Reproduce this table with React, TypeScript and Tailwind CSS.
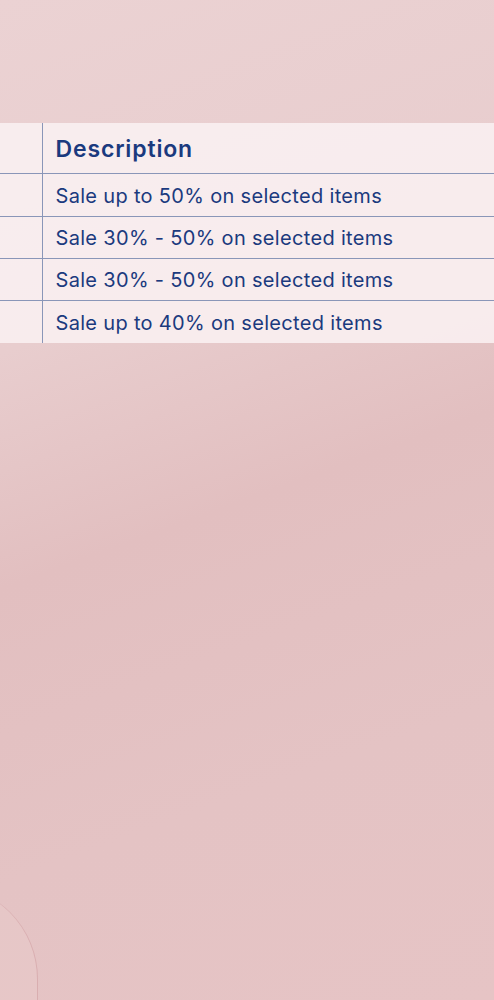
const rows = [
  "Sale up to 50% on selected items",
  "Sale 30% - 50% on selected items",
  "Sale 30% - 50% on selected items",
  "Sale up to 40% on selected items",
];

export default function App() {
  return (
    <div className="relative h-[1000px] w-[494px] overflow-hidden bg-[linear-gradient(160deg,#ebd2d3_0%,#e8cdce_30%,#e2bfc0_50%,#e4c3c4_75%,#e6c4c5_100%)] font-['Inter','Open_Sans',sans-serif]">
      <div className="pt-[123px]">
        <table className="w-full border-collapse bg-[#f9f0f1]/90 text-[#1b3a7e]">
          <thead>
            <tr className="h-[50px] border-b border-[#8a96b8]">
              <th className="w-[42px] border-r border-[#8a96b8]"></th>
              <th className="pl-[13px] pt-[3px] text-left text-[23px] font-semibold tracking-[0.85px]">Description</th>
            </tr>
          </thead>
          <tbody>
            {rows.map((r, i) => (
              <tr key={i} className={i === 0 || i === rows.length - 1 ? "h-[43px] border-b border-[#8a96b8] last:border-b-0" : "h-[42px] border-b border-[#8a96b8]"}>
                <td className="border-r border-[#8a96b8]"></td>
                <td className="pl-[13px] pt-[2px] text-[20px] font-normal tracking-[0.32px]">{r}</td>
              </tr>
            ))}
          </tbody>
        </table>
      </div>
      <div className="absolute left-[-150px] top-[885px] h-[300px] w-[188px] rounded-full border-r border-[#d9aeb0] bg-[#e8c9ca]/60" />
    </div>
  );
}
